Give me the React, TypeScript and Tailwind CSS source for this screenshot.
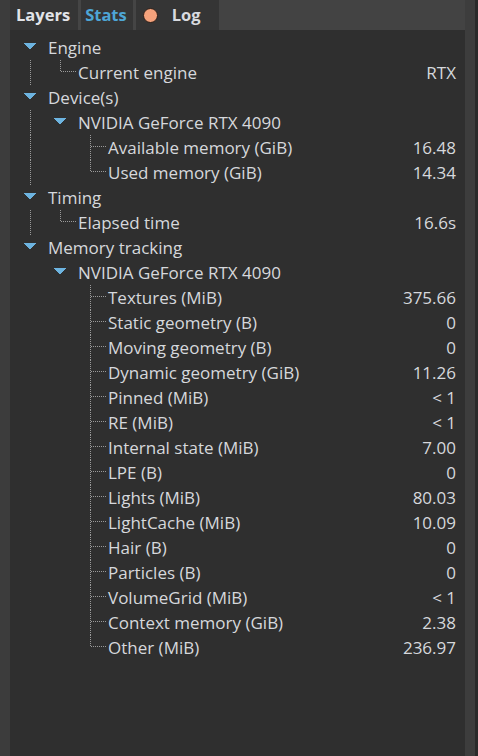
type Node = { label: string; value?: string; children?: Node[] };

const tree: Node[] = [
  { label: "Engine", children: [{ label: "Current engine", value: "RTX" }] },
  {
    label: "Device(s)",
    children: [
      {
        label: "NVIDIA GeForce RTX 4090",
        children: [
          { label: "Available memory (GiB)", value: "16.48" },
          { label: "Used memory (GiB)", value: "14.34" },
        ],
      },
    ],
  },
  { label: "Timing", children: [{ label: "Elapsed time", value: "16.6s" }] },
  {
    label: "Memory tracking",
    children: [
      {
        label: "NVIDIA GeForce RTX 4090",
        children: [
          { label: "Textures (MiB)", value: "375.66" },
          { label: "Static geometry (B)", value: "0" },
          { label: "Moving geometry (B)", value: "0" },
          { label: "Dynamic geometry (GiB)", value: "11.26" },
          { label: "Pinned (MiB)", value: "< 1" },
          { label: "RE (MiB)", value: "< 1" },
          { label: "Internal state (MiB)", value: "7.00" },
          { label: "LPE (B)", value: "0" },
          { label: "Lights (MiB)", value: "80.03" },
          { label: "LightCache (MiB)", value: "10.09" },
          { label: "Hair (B)", value: "0" },
          { label: "Particles (B)", value: "0" },
          { label: "VolumeGrid (MiB)", value: "< 1" },
          { label: "Context memory (GiB)", value: "2.38" },
          { label: "Other (MiB)", value: "236.97" },
        ],
      },
    ],
  },
];

type Guide = "none" | "line" | "tee" | "ell" | "tri";
type Row = { label: string; value?: string; guides: Guide[] };

function flatten(nodes: Node[], parents: boolean[], out: Row[]) {
  nodes.forEach((node, i) => {
    const isLast = i === nodes.length - 1;
    const guides: Guide[] = parents.map((more) => (more ? "line" : "none"));
    guides.push(node.children ? "tri" : isLast ? "ell" : "tee");
    out.push({ label: node.label, value: node.value, guides });
    if (node.children) flatten(node.children, [...parents, !isLast], out);
  });
  return out;
}

const rows = flatten(tree, [], []);
const dot = "#9a9a9a";

function GuideCell({ kind }: { kind: Guide }) {
  return (
    <svg width="30" height="25" className="shrink-0" shapeRendering="crispEdges">
      {(kind === "line" || kind === "tee") && (
        <line x1="14.5" y1="0" x2="14.5" y2="25" stroke={dot} strokeDasharray="1 1" />
      )}
      {kind === "ell" && (
        <line x1="14.5" y1="0" x2="14.5" y2="12" stroke={dot} strokeDasharray="1 1" />
      )}
      {(kind === "tee" || kind === "ell") && (
        <line x1="15" y1="11.5" x2="31" y2="11.5" stroke={dot} strokeDasharray="1 1" />
      )}
      {kind === "tri" && <polygon points="8,8 20,8 14,15" fill="#6db4e0" />}
    </svg>
  );
}

export default function App() {
  return (
    <div
      className="flex h-[756px] w-[478px] bg-[#3c3c3c] text-[#d6d8dc]"
      style={{ fontFamily: '"Open Sans", "Noto Sans", sans-serif' }}
    >
      <div className="w-[10px] shrink-0" />
      <div className="flex flex-1 flex-col">
        {/* Tabs */}
        <div className="flex h-[30px] shrink-0 bg-[#434343]">
          <div className="flex items-center bg-[#353535] pl-[6px] pr-[8px] text-[16.5px] font-bold text-[#e2e4e8]">
            Layers
          </div>
          <div className="w-[3px] bg-[#454545]" />
          <div className="flex items-center bg-[#353535] pl-[4px] pr-[6px] text-[16.5px] font-bold text-[#4ea6d6]">
            Stats
          </div>
          <div className="w-[3px] bg-[#454545]" />
          <div className="flex items-center gap-[14px] bg-[#353535] pl-[7px] pr-[18px] text-[16.5px] font-bold text-[#d8dadf]">
            <span className="h-[15px] w-[15px] rounded-full border border-[#2a1e18] bg-[#f5a27c]" />
            Log
          </div>
        </div>

        {/* Stats tree */}
        <div className="flex-1 bg-[#2f2f2f] pl-[6px] pr-[9px] pt-[5px]">
          {rows.map((row, i) => (
            <div key={i} className="flex h-[25px] items-center text-[17px] leading-none">
              {row.guides.map((g, j) => (
                <GuideCell key={j} kind={g} />
              ))}
              <span className="whitespace-nowrap pl-[2px]">{row.label}</span>
              <span className="ml-auto whitespace-nowrap">{row.value}</span>
            </div>
          ))}
        </div>
      </div>
      <div className="w-[10px] shrink-0 bg-[#3d3d3d]" />
      <div className="w-[3px] shrink-0 bg-[#2a2a2a]" />
    </div>
  );
}
